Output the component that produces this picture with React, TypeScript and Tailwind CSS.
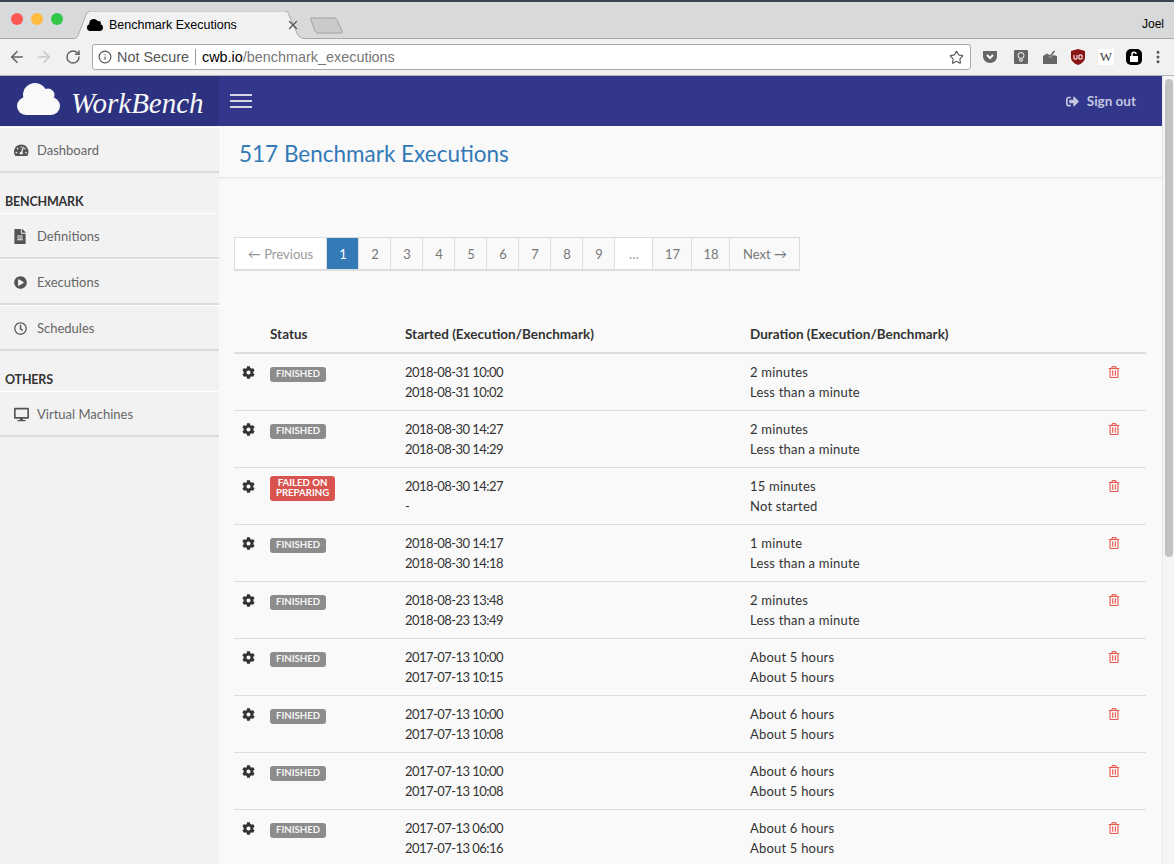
import { ArrowLeft, ArrowRight, Info, MoreVertical, RotateCw, Star, X } from "lucide-react";
import {
  FaCog,
  FaDesktop,
  FaFileAlt,
  FaPlayCircle,
  FaRegClock,
  FaRegTrashAlt,
  FaSignOutAlt,
  FaTachometerAlt,
} from "react-icons/fa";
import type { ReactNode } from "react";

const rows = [
  ["FINISHED", "2018-08-31 10:00", "2018-08-31 10:02", "2 minutes", "Less than a minute"],
  ["FINISHED", "2018-08-30 14:27", "2018-08-30 14:29", "2 minutes", "Less than a minute"],
  ["FAILED", "2018-08-30 14:27", "-", "15 minutes", "Not started"],
  ["FINISHED", "2018-08-30 14:17", "2018-08-30 14:18", "1 minute", "Less than a minute"],
  ["FINISHED", "2018-08-23 13:48", "2018-08-23 13:49", "2 minutes", "Less than a minute"],
  ["FINISHED", "2017-07-13 10:00", "2017-07-13 10:15", "About 5 hours", "About 5 hours"],
  ["FINISHED", "2017-07-13 10:00", "2017-07-13 10:08", "About 6 hours", "About 5 hours"],
  ["FINISHED", "2017-07-13 10:00", "2017-07-13 10:08", "About 6 hours", "About 5 hours"],
  ["FINISHED", "2017-07-13 06:00", "2017-07-13 06:16", "About 6 hours", "About 5 hours"],
];

const pages = [
  { label: "1", w: "w-[32px]", active: true },
  { label: "2", w: "w-[32px]" },
  { label: "3", w: "w-[32px]" },
  { label: "4", w: "w-[32px]" },
  { label: "5", w: "w-[32px]" },
  { label: "6", w: "w-[32px]" },
  { label: "7", w: "w-[32px]" },
  { label: "8", w: "w-[32px]" },
  { label: "9", w: "w-[32px]" },
  { label: "…", w: "w-[38px]", muted: true },
  { label: "17", w: "w-[39px]" },
  { label: "18", w: "w-[38px]" },
];

function Cloud({ className, fill }: { className: string; fill: string }) {
  return (
    <svg className={className} viewBox="0 0 43 32" fill={fill} aria-hidden="true">
      <circle cx="9" cy="23" r="9" />
      <circle cx="18" cy="12" r="12" />
      <circle cx="31" cy="12" r="6.500" />
      <circle cx="34" cy="23" r="9" />
      <rect x="9" y="18" width="25" height="14" />
    </svg>
  );
}

function SideItem({ icon, label }: { icon: ReactNode; label: string }) {
  return (
    <div className="flex h-[46px] items-center border-t border-white border-b-2 border-b-[#dcdcdc] pl-[14px] pt-[2px] text-[#666666]">
      <span className="flex w-[23px] text-[#555555]">{icon}</span>
      <span>{label}</span>
    </div>
  );
}

function BrowserChrome() {
  return (
    <div className="h-[76px] font-['Liberation_Sans',sans-serif]">
      <div className="h-[39px] border-t-2 border-t-[#3a4450] border-b border-b-[#a9a9ab] bg-[#d8d9db] flex items-end relative">
        <div className="flex gap-[8px] pl-[11px] self-center mb-[3px]">
          <span className="h-[12px] w-[12px] rounded-full bg-[#fc5753]" />
          <span className="h-[12px] w-[12px] rounded-full bg-[#fdbc40]" />
          <span className="h-[12px] w-[12px] rounded-full bg-[#33c748]" />
        </div>
        <div className="relative ml-[9px] h-[28px] w-[235px] -mb-px flex items-center pl-[15px]">
          <svg className="absolute inset-0 h-full w-full" viewBox="0 0 235 28" aria-hidden="true">
            <path d="M0 28 C5 28 6 25 7 22 L14 4 C15 1 17 0 19 0 H212 C215 0 216 1 217 4 L225 22 C226 25 229 28 235 28" fill="#f1f1f1" stroke="#a9a9ab" />
          </svg>
          <Cloud className="relative h-[12px] w-[16px]" fill="#000000" />
          <span className="relative ml-[6px] text-[12.500px] text-black">Benchmark Executions</span>
          <X className="absolute right-[7px] top-[7px] h-[14px] w-[14px] text-[#555555]" strokeWidth={2.2} />
        </div>
        <svg className="ml-[3px] mb-[4px] h-[17px] w-[33px]" viewBox="0 0 33 17" aria-hidden="true">
          <path d="M1 1 H24 C26 1 26 2 27 3 L32 14 C33 16 32 16 30 16 H8 C6 16 6 15 5 14 L1 3 C0 1 0 1 1 1Z" fill="#c9cacc" stroke="#a2a2a4" />
        </svg>
        <span className="absolute right-[10px] top-[13px] text-[12px] text-black">Joel</span>
      </div>
      <div className="h-[37px] bg-[#f1f1f1] border-b border-b-[#b4b4b4] flex items-center">
        <ArrowLeft className="ml-[8px] h-[18px] w-[18px] text-[#606468]" strokeWidth={2.2} />
        <ArrowRight className="ml-[9px] h-[18px] w-[18px] text-[#c8c8c8]" strokeWidth={2.2} />
        <RotateCw className="ml-[12px] h-[16px] w-[16px] text-[#606468]" strokeWidth={2.2} />
        <div className="ml-[11px] h-[26px] w-[879px] rounded-[3px] border border-[#a9a9a9] bg-white flex items-center pl-[5px] text-[14.400px]">
          <Info className="h-[14px] w-[14px] text-[#555555]" strokeWidth={2} />
          <span className="ml-[5px] pt-px text-[#555555]">Not Secure</span>
          <span className="mx-[6px] h-[16px] w-px bg-[#9a9a9a]" />
          <span className="pt-px text-black">cwb.io</span>
          <span className="pt-px text-[#777777]">/benchmark_executions</span>
          <Star className="ml-auto mr-[6px] h-[15px] w-[15px] text-[#555555]" strokeWidth={1.8} />
        </div>
        <svg className="ml-[11px] h-[16px] w-[16px]" viewBox="0 0 16 16" aria-hidden="true">
          <path d="M1 2 H15 V7 C15 11 12 14 8 14 C4 14 1 11 1 7Z" fill="#666666" />
          <path d="M5 6 L8 9 L11 6" fill="none" stroke="#ffffff" strokeWidth="2" />
        </svg>
        <svg className="ml-[15px] h-[16px] w-[16px]" viewBox="0 0 16 16" aria-hidden="true">
          <rect x="1" y="1" width="14" height="14" rx="1" fill="#666666" />
          <circle cx="8" cy="6.500" r="3" fill="none" stroke="#ffffff" />
          <path d="M6.800 10 V12 H9.200 V10" fill="none" stroke="#ffffff" />
        </svg>
        <svg className="ml-[13px] h-[16px] w-[16px]" viewBox="0 0 16 16" aria-hidden="true">
          <path d="M1 7 L4 5 L8 9 L11 6 L15 7 V15 H1Z" fill="#666666" />
          <path d="M4.500 5 L8 7.500 L12.500 2" fill="none" stroke="#666666" strokeWidth="1.600" />
        </svg>
        <svg className="ml-[12px] h-[16px] w-[16px]" viewBox="0 0 16 16" aria-hidden="true">
          <path d="M8 0 L15 2 V9 C15 12 11 15 8 16 C5 15 1 12 1 9 V2Z" fill="#8a1512" />
          <path d="M4 6 V10 H7 V6 M9 6 V10 H12 V6 H9" fill="none" stroke="#ffffff" />
        </svg>
        <span className="ml-[12px] flex h-[16px] w-[16px] items-center justify-center bg-white font-['Liberation_Serif',serif] text-[13px] text-[#444444]">
          W
        </span>
        <svg className="ml-[12px] h-[16px] w-[16px]" viewBox="0 0 16 16" aria-hidden="true">
          <rect width="16" height="16" rx="5" fill="#000000" />
          <rect x="4" y="7" width="8" height="6" fill="#ffffff" />
          <path d="M6 7 V5 C6 2.500 10 2.500 10 5" fill="none" stroke="#ffffff" strokeWidth="1.500" />
        </svg>
        <MoreVertical className="ml-[8px] h-[16px] w-[16px] text-[#555555]" strokeWidth={2.5} />
      </div>
    </div>
  );
}

export default function App() {
  return (
    <div className="h-[864px] w-[1174px] overflow-hidden bg-[#f9f9f9] font-['Lato',sans-serif] text-[13px]">
      <BrowserChrome />
      <div className="flex h-[788px]">
        <div className="flex min-w-0 w-[1162px] flex-col">
          <header className="flex h-[50px] shrink-0 bg-[#32378c]">
            <div className="flex w-[219px] items-center bg-[#2d3280] pl-[17px]">
              <Cloud className="mb-[4px] h-[32px] w-[43px]" fill="#f9f9f9" />
              <span className="ml-[11px] mt-[6px] font-['Liberation_Serif',serif] text-[29px] italic text-[#f9f9f9]">
                WorkBench
              </span>
            </div>
            <div className="ml-[11px] flex flex-col justify-center gap-[4px]">
              <span className="h-[2px] w-[22px] bg-[#d5d6e8]" />
              <span className="h-[2px] w-[22px] bg-[#d5d6e8]" />
              <span className="h-[2px] w-[22px] bg-[#d5d6e8]" />
            </div>
            <div className="ml-auto mr-[26px] flex items-center text-[13.500px] text-[#c3c5e0] font-bold">
              <FaSignOutAlt className="mr-[8px] text-[13px]" />
              Sign out
            </div>
          </header>
          <div className="flex min-h-0 flex-1">
            <aside className="w-[219px] bg-[#f2f2f2] pt-px">
              <SideItem icon={<FaTachometerAlt className="text-[14.500px]" />} label="Dashboard" />
              <div className="flex h-[40px] items-end pb-px pl-[5px] text-[12.500px] font-bold tracking-[-0.2px] text-[#333333]">BENCHMARK</div>
              <SideItem icon={<FaFileAlt className="h-[15px] w-[12px]" />} label="Definitions" />
              <SideItem icon={<FaPlayCircle className="text-[13px]" />} label="Executions" />
              <SideItem icon={<FaRegClock className="text-[13px]" />} label="Schedules" />
              <div className="flex h-[40px] items-end pb-px pl-[5px] text-[12.500px] font-bold tracking-[-0.2px] text-[#333333]">OTHERS</div>
              <SideItem icon={<FaDesktop className="text-[15px]" />} label="Virtual Machines" />
            </aside>
            <main className="flex-1">
              <div className="flex h-[52px] items-center border-b border-[#e6e6e6] pl-[20px] pt-[4px] text-[22.500px] text-[#337ab7] shadow-[0_1px_2px_rgba(0,0,0,0.05)]">
                517 Benchmark Executions
              </div>
              <div className="pl-[15px] pt-[59px]">
                <div className="flex h-[34px] w-[566px] text-[#777777]">
                  <div className="flex w-[93px] items-center justify-center gap-[4px] border border-b-2 border-[#dddddd] bg-white pt-[2px] text-[#999999]">
                    ← Previous
                  </div>
                  {pages.map((p) => (
                    <div
                      key={p.label}
                      className={`flex items-center justify-center border-t border-r border-b-2 border-[#dddddd] pl-px pt-[2px] ${p.w} ${
                        p.active ? "bg-[#337ab7] text-white border-[#337ab7]" : p.muted ? "bg-white text-[#999999]" : ""
                      }`}
                    >
                      {p.label}
                    </div>
                  ))}
                  <div className="flex w-[70px] items-center justify-center border-t border-r border-b-2 border-[#dddddd] pl-px pt-[2px]">Next →</div>
                </div>
                <div className="mt-[45px] w-[912px] text-[#333333]">
                  <div className="grid h-[38px] grid-cols-[28px_135px_345px_358px_46px] items-center border-b-2 border-[#dddddd] text-[13.500px] font-bold">
                    <span />
                    <span className="px-[8px]">Status</span>
                    <span className="px-[8px]">Started (Execution/Benchmark)</span>
                    <span className="px-[8px]">Duration (Execution/Benchmark)</span>
                    <span />
                  </div>
                  {rows.map((r, i) => (
                    <div key={i} className="grid h-[57px] grid-cols-[28px_135px_345px_358px_46px] border-b border-[#dddddd] pt-[8px] leading-[20px]">
                      <span className="pl-[8px] pt-[4px]">
                        <FaCog className="text-[13px] text-[#333333]" />
                      </span>
                      <span className="px-[8px]">
                        {r[0] === "FINISHED" ? (
                          <span className="mt-[5px] inline-block rounded-[3px] bg-[#8c8c8c] px-[6px] pb-px text-[9.600px] font-bold leading-[14px] text-[#f5f5f5] align-top">
                            FINISHED
                          </span>
                        ) : (
                          <span className="inline-block rounded-[3px] bg-[#d9534f] px-[6px] pt-[2px] pb-[3px] text-center text-[9.600px] font-bold leading-[10px] text-white align-top">
                            FAILED ON
                            <br />
                            PREPARING
                          </span>
                        )}
                      </span>
                      <span className="px-[8px] tracking-[-0.55px]">
                        {r[1]}
                        <br />
                        {r[2]}
                      </span>
                      <span className="px-[8px] tracking-[0.2px]">
                        {r[3]}
                        <br />
                        {r[4]}
                      </span>
                      <span className="px-[8px] pt-[4px]">
                        <FaRegTrashAlt className="text-[12px] text-[#e9594c]" />
                      </span>
                    </div>
                  ))}
                </div>
              </div>
            </main>
          </div>
        </div>
        <div className="w-[12px] border-l border-[#e8e8e8] bg-[#f5f5f5] pl-[2px] pt-[3px]">
          <div className="h-[478px] w-[8px] rounded-full bg-[#c1c1c1]" />
        </div>
      </div>
    </div>
  );
}
